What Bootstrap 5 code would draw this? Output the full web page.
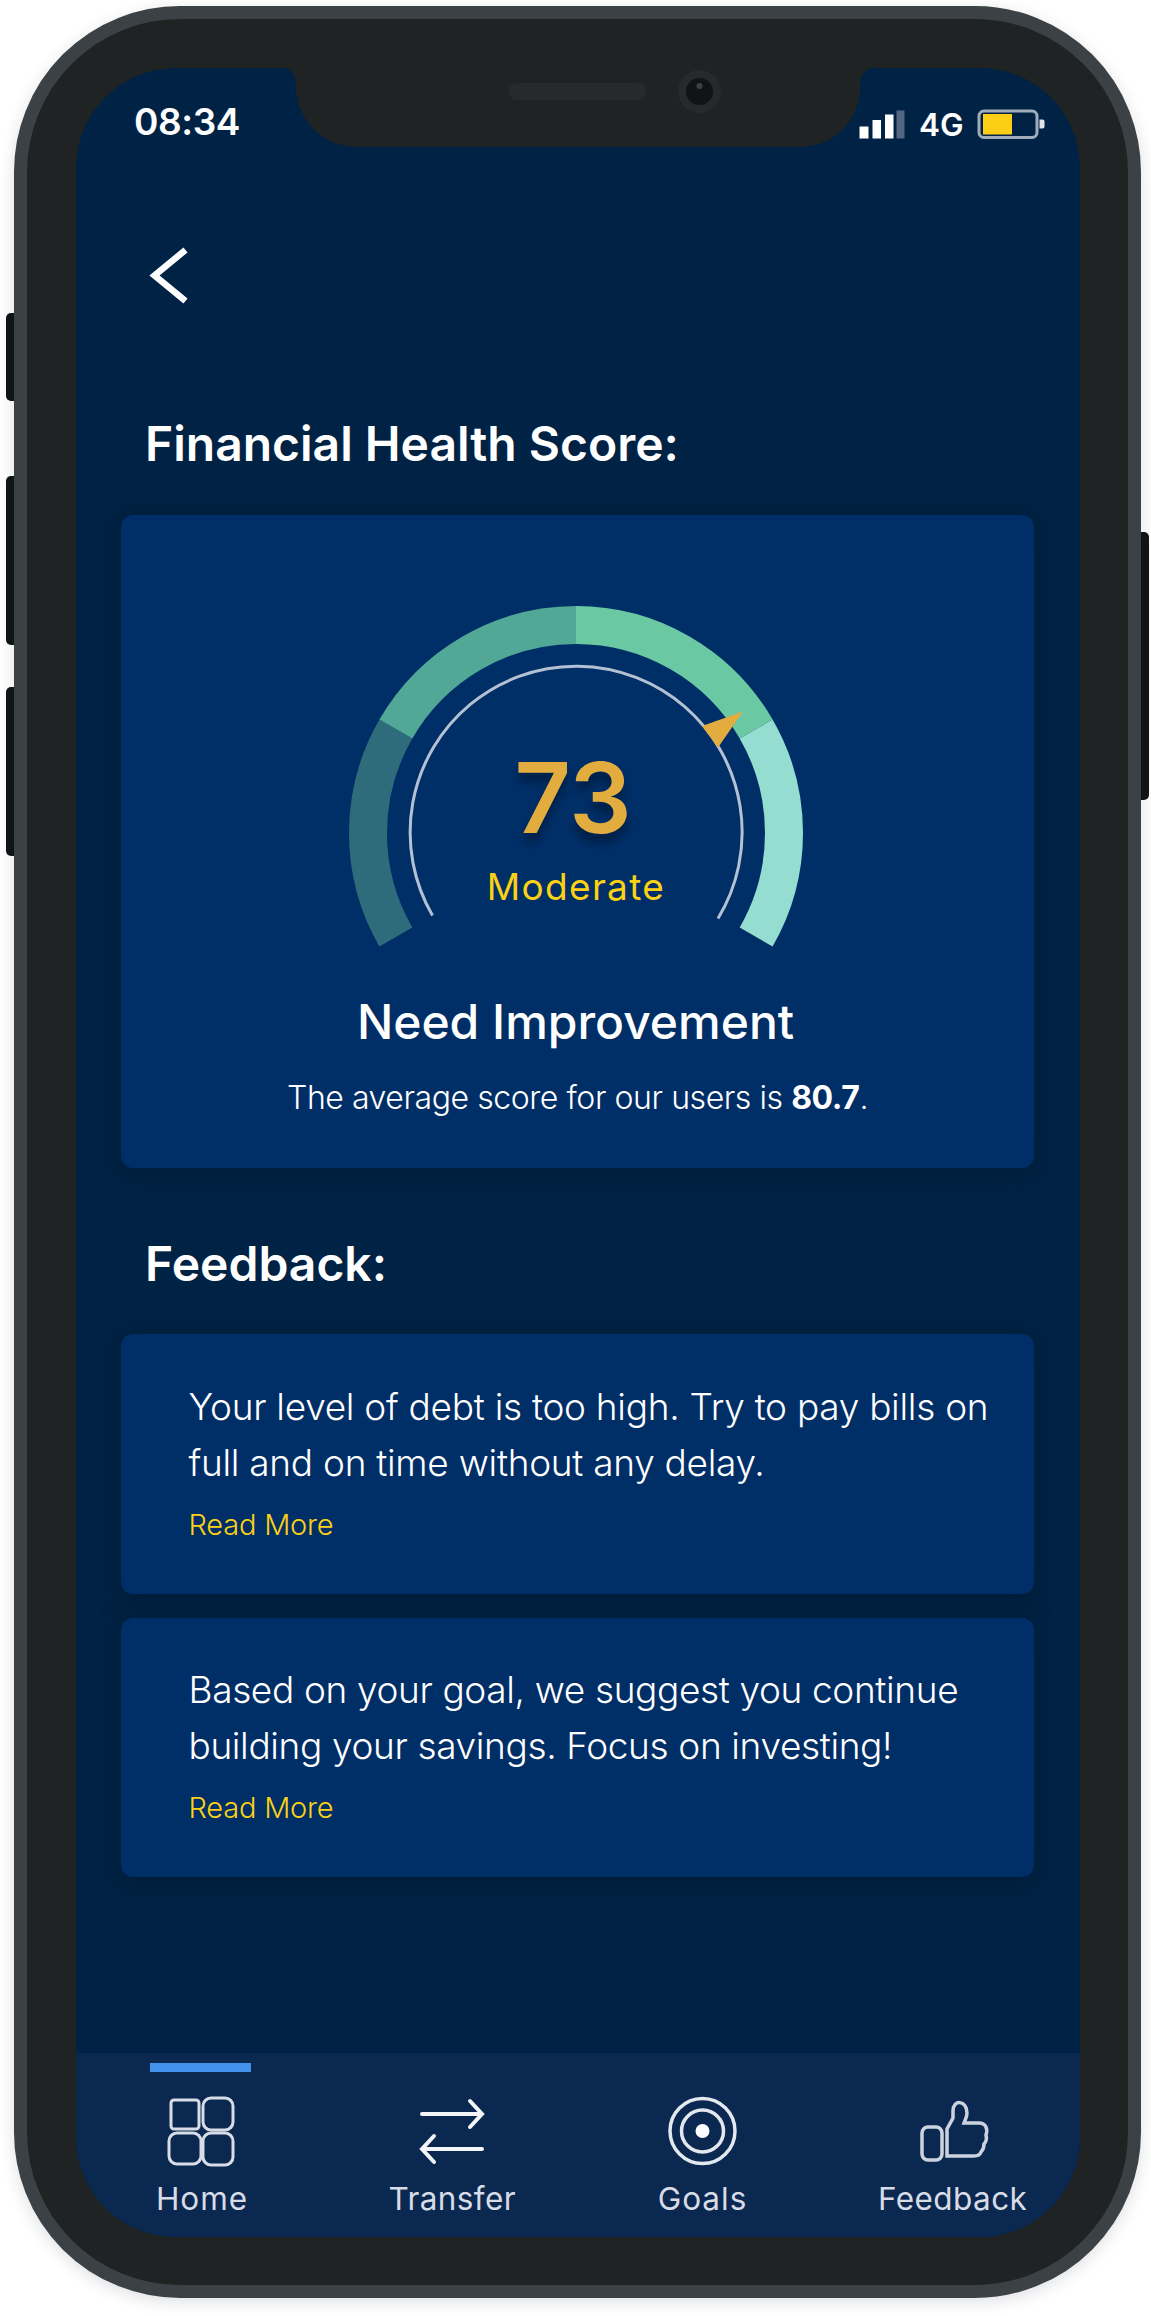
<!DOCTYPE html>
<html lang="en">
<head>
<meta charset="utf-8">
<meta name="viewport" content="width=device-width, initial-scale=1">
<title>Financial Health Score</title>
<link href="https://cdn.jsdelivr.net/npm/bootstrap@5.3.0/dist/css/bootstrap.min.css" rel="stylesheet">
<style>
  body { background: #fff; font-family: Inter, "Liberation Sans", sans-serif; color: #fff; }
  .stage { width: 1151px; height: 2316px; padding: 6px 10px 0 14px; overflow: hidden; }
  .phone { width: 1127px; height: 2292px; border: 13px solid #3b4144; border-radius: 166px; background: #202323; padding: 49px 48.5px 48px 49px; box-shadow: 0 4px 16px rgba(30,35,60,.14); }
  .side-key { width: 8px; background: #111415; left: 6px; border-radius: 5px 0 0 5px; }
  .key-mute { top: 313px; height: 88px; }
  .key-up { top: 476px; height: 169px; }
  .key-down { top: 687px; height: 169px; }
  .key-power { top: 532px; height: 268px; left: 1141px; border-radius: 0 5px 5px 0; }
  .screen { height: 2168.5px; border-radius: 100px; background: #002244; overflow: hidden; }
  .notch { left: 204px; top: -2px; }
  .status-bar { height: 80px; padding: 33px 35px 0 58px; }
  .clock { font-size: 37px; font-weight: 600; line-height: 40px; letter-spacing: -.4px; }
  .network { font-size: 31.5px; font-weight: 600; line-height: 36px; margin: 2px 13px 0 13.5px; }
  .status-icons { margin-top: 3.5px; }
  .clock-wrap { padding-top: 1px; }
  .back { margin: 97px 0 0 71px; width: 44px; height: 60px; }
  .section-title { font-size: 48px; font-weight: 600; line-height: 58px; margin: 0 0 0 69px; }
  .t-score { margin-top: 110px; }
  .t-feedback { margin-top: 67px; }
  .panel { background: #002e66; border-radius: 12px; margin-left: 45px; width: 913px; box-shadow: 0 4px 22px rgba(0,25,48,.7); }
  .score-panel { height: 653px; margin-top: 42px; padding-top: 81px; }
  .gauge { width: 470px; height: 360px; left: -2px; }
  .score-value { left: 0; right: 5px; top: 146px; font-size: 98px; font-weight: 600; line-height: 112px; color: #e2ac3f; text-shadow: 0 9px 8px rgba(0,0,0,.3); }
  .score-level { left: 1px; right: 0; top: 269px; font-size: 37px; line-height: 44px; letter-spacing: 1.3px; color: #fbd116; }
  .verdict { font-size: 48px; font-weight: 500; line-height: 58px; margin: 37px 4px 0 0; }
  .average { font-size: 32px; font-weight: 300; line-height: 40px; letter-spacing: -.43px; margin: 27px 0 0; }
  .average strong { font-weight: 700; }
  .tip { height: 259.5px; padding: 44.5px 0 0 67.5px; }
  .tip-first { margin-top: 41px; }
  .tip-next { margin-top: 24px; }
  .tip p { font-size: 37px; font-weight: 300; line-height: 56px; letter-spacing: -.28px; margin: 0; }
  .tip-next p { letter-spacing: -.36px; }
  .tip a { font-size: 29px; font-weight: 300; line-height: 40px; letter-spacing: -.2px; color: #fbd116; margin-top: 14px; }
  .tab-bar { height: 184px; background: #0a2850; }
  .tab { width: 250.2px; font-size: 31.5px; line-height: 36px; letter-spacing: .4px; color: #d7dce6; padding-top: 40px; }
  .tab svg { width: 76px; height: 76px; }
  .tab span { margin: 12px 0 0 2px; }
  .tab-wide { letter-spacing: 1px; }
  .marker { width: 101px; height: 9px; background: #4291ea; top: 10.5px; left: 74px; }
</style>
<script src="https://cdn.jsdelivr.net/npm/bootstrap@5.3.0/dist/js/bootstrap.bundle.min.js"></script>
</head>
<body>
<div class="stage position-relative">
  <div class="side-key key-mute position-absolute"></div>
  <div class="side-key key-up position-absolute"></div>
  <div class="side-key key-down position-absolute"></div>
  <div class="side-key key-power position-absolute"></div>
  <div class="phone">
    <main class="screen position-relative d-flex flex-column">
      <svg class="notch position-absolute" width="596" height="82" viewBox="0 0 596 82">
        <path d="M0 0H596V1.500C587 1.500 580.500 7 580.500 16C580.500 54 556 81 518 81H78C42 81 15.500 54 15.500 16C15.500 7 9 1.500 0 1.500Z" fill="#202323"/>
        <rect x="229" y="17" width="137" height="17" rx="8" fill="#262a2c"/>
        <circle cx="419.500" cy="25.500" r="21.500" fill="#262a2c"/><circle cx="419.500" cy="25.500" r="13.600" fill="#111414"/><circle cx="419.500" cy="20" r="3" fill="#3c4042"/>
      </svg>
      <header class="status-bar d-flex justify-content-between align-items-start">
        <div class="clock-wrap"><span class="clock">08:34</span></div>
        <div class="status-icons d-flex align-items-center">
          <svg width="46" height="32" viewBox="0 0 46 32"><path d="M.5 18.500h9v12h-9zM13.500 12h8.500v18.500h-8.500zM26 6.500h8.500v24H26z" fill="#fff"/><path d="M37.500 2.500h8v28h-8z" fill="#526782"/></svg>
          <span class="network">4G</span>
          <svg width="68" height="32" viewBox="0 0 68 32"><rect x="2" y="3" width="58" height="26.500" rx="5" fill="none" stroke="#a2adbb" stroke-width="3"/><rect x="6" y="6" width="29" height="20.500" fill="#fccf16"/><path d="M62.500 11.500h3a2 2 0 0 1 2 2v5a2 2 0 0 1-2 2h-3z" fill="#dfe4ea"/></svg>
        </div>
      </header>
      <svg class="back" viewBox="0 0 44 60"><path d="M36 7L7.500 30.500L36 54" fill="none" stroke="#fff" stroke-width="6.500" stroke-linecap="square"/></svg>

      <h1 class="section-title t-score">Financial Health Score:</h1>
      <section class="panel score-panel text-center">
        <div class="gauge position-relative mx-auto">
          <svg class="d-block" width="470" height="360" viewBox="-235 -237 470 360" fill="none">
            <g stroke-width="38">
              <path d="M-180.130 104A208 208 0 0 1-180.130-104" stroke="#2e6c7b"/>
              <path d="M-180.130-104A208 208 0 0 1 0-208" stroke="#51a897"/>
              <path d="M0-208A208 208 0 0 1 180.130-104" stroke="#6ac9a2"/>
              <path d="M180.130-104A208 208 0 0 1 180.130 104" stroke="#95ddd0"/>
            </g>
            <path d="M-143.500 82.500A166 166 0 1 1 142 85.500" stroke="#b4c1d5" stroke-width="3"/>
            <path d="M126-107L167-121.500L142-85.500Z" fill="#e2ac3f"/>
          </svg>
          <div class="score-value position-absolute">73</div>
          <div class="score-level position-absolute">Moderate</div>
        </div>
        <h2 class="verdict">Need Improvement</h2>
        <p class="average">The average score for our users is <strong>80.7</strong>.</p>
      </section>

      <h1 class="section-title t-feedback">Feedback:</h1>
      <section class="panel tip tip-first">
        <p>Your level of debt is too high. Try to pay bills on<br>full and on time without any delay.</p>
        <a href="#" class="d-inline-block text-decoration-none">Read More</a>
      </section>
      <section class="panel tip tip-next">
        <p>Based on your goal, we suggest you continue<br>building your savings. Focus on investing!</p>
        <a href="#" class="d-inline-block text-decoration-none">Read More</a>
      </section>

      <nav class="tab-bar mt-auto d-flex position-relative">
        <div class="marker position-absolute"></div>
        <a class="tab tab-wide d-flex flex-column align-items-center text-decoration-none" href="#">
          <svg viewBox="-38 -38 76 76" fill="none" stroke="#d7dce6" stroke-width="3"><rect x="-30" y="-31" width="28" height="29" rx="3"/><rect x="2" y="-33" width="30" height="32" rx="8"/><rect x="-32" y="2" width="32" height="31" rx="8"/><rect x="2" y="2" width="30" height="32" rx="8"/></svg>
          <span>Home</span></a>
        <a class="tab d-flex flex-column align-items-center text-decoration-none" href="#">
          <svg viewBox="-38 -38 76 76" fill="none" stroke="#f3f5f8" stroke-width="4" stroke-linecap="round"><path d="M-29-17H31M19-30L31-17L19-4M31 18H-29M-17 5L-29 18L-17 31"/></svg>
          <span>Transfer</span></a>
        <a class="tab tab-wide d-flex flex-column align-items-center text-decoration-none" href="#">
          <svg viewBox="-38 -38 76 76" fill="none" stroke="#e3e7ee" stroke-width="3.500"><circle cx="1.500" r="32.500"/><circle cx="1.500" r="21"/><circle cx="1.500" r="7" fill="#fff" stroke="none"/></svg>
          <span>Goals</span></a>
        <a class="tab d-flex flex-column align-items-center text-decoration-none" href="#">
          <svg viewBox="-38 -38 76 76" fill="none" stroke="#ccd3df" stroke-width="3.500"><rect x="-30" y="-4" width="20" height="33" rx="6"/><path d="M-5 25V-2L1-13V-20C1-32 15-31 15-18C15-14 13-11 12-8H27C34-8 36-2 34 4C35 8 34 11 32 13C32 17 31 19 29 21C28 24 26 25 22 25Z"/></svg>
          <span>Feedback</span></a>
      </nav>
    </main>
  </div>
</div>
</body>
</html>
